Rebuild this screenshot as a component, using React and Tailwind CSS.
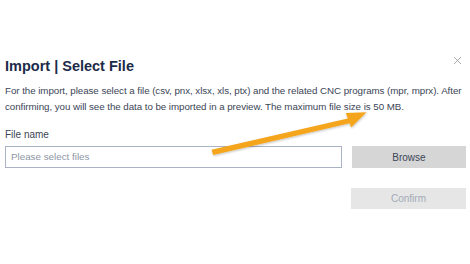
import { X } from 'lucide-react'

const App = () => {
  return (
    <div className="relative w-[470px] h-[264px] bg-white overflow-hidden font-['Liberation_Sans',Arial,sans-serif]">
      <div className="flex justify-end pt-[54px] pr-[6px]">
        <X size={13} strokeWidth={1.4} className="text-[#8f8f8f]" />
      </div>

      <div className="px-[5px] pr-[4px]">
        <h1 className="mt-[-11px] text-[14.5px] leading-[20px] font-bold text-[#1c2b4a]">Import | Select File</h1>

        <p className="mt-[7px] text-[9.75px] leading-[16px] tracking-[-0.05px] whitespace-nowrap text-[#3b4556]">
          For the import, please select a file (csv, pnx, xlsx, xls, ptx) and the related CNC programs (mpr, mprx). After
          <br />
          confirming, you will see the data to be imported in a preview. The maximum file size is 50 MB.
        </p>

        <div className="mt-[13px] text-[10px] leading-[14px] text-[#3b4556]">File name</div>

        <div className="mt-[4px] flex gap-[10px]">
          <div className="w-[337px] h-[22px] border border-[#a9b3c3] flex items-center px-[5px] text-[9.8px] text-[#8d96a6]">
            Please select files
          </div>
          <button className="flex-1 h-[22px] bg-[#d6d6d6] text-[10px] text-[#3b4556]">Browse</button>
        </div>

        <div className="mt-[20px] flex justify-end">
          <button className="w-[115px] h-[21px] bg-[#e6e6e6] text-[10px] text-[#a2aab6]">Confirm</button>
        </div>
      </div>

      {/* callout arrow drawn over the dialog */}
      <svg className="absolute left-0 top-0 pointer-events-none" width="470" height="264">
        <defs>
          <filter id="sh" x="-10%" y="-50%" width="120%" height="200%">
            <feDropShadow dx="0.5" dy="1" stdDeviation="0.8" floodColor="#000" floodOpacity="0.25" />
          </filter>
        </defs>
        <g filter="url(#sh)" fill="#f4a51c">
          <path d="M211.5 149.8 L347.8 118.6 L345.8 113 L366.5 112.2 L351.2 127.5 L349.6 123.2 L213.2 155 Z" />
        </g>
      </svg>
    </div>
  )
}

export default App
